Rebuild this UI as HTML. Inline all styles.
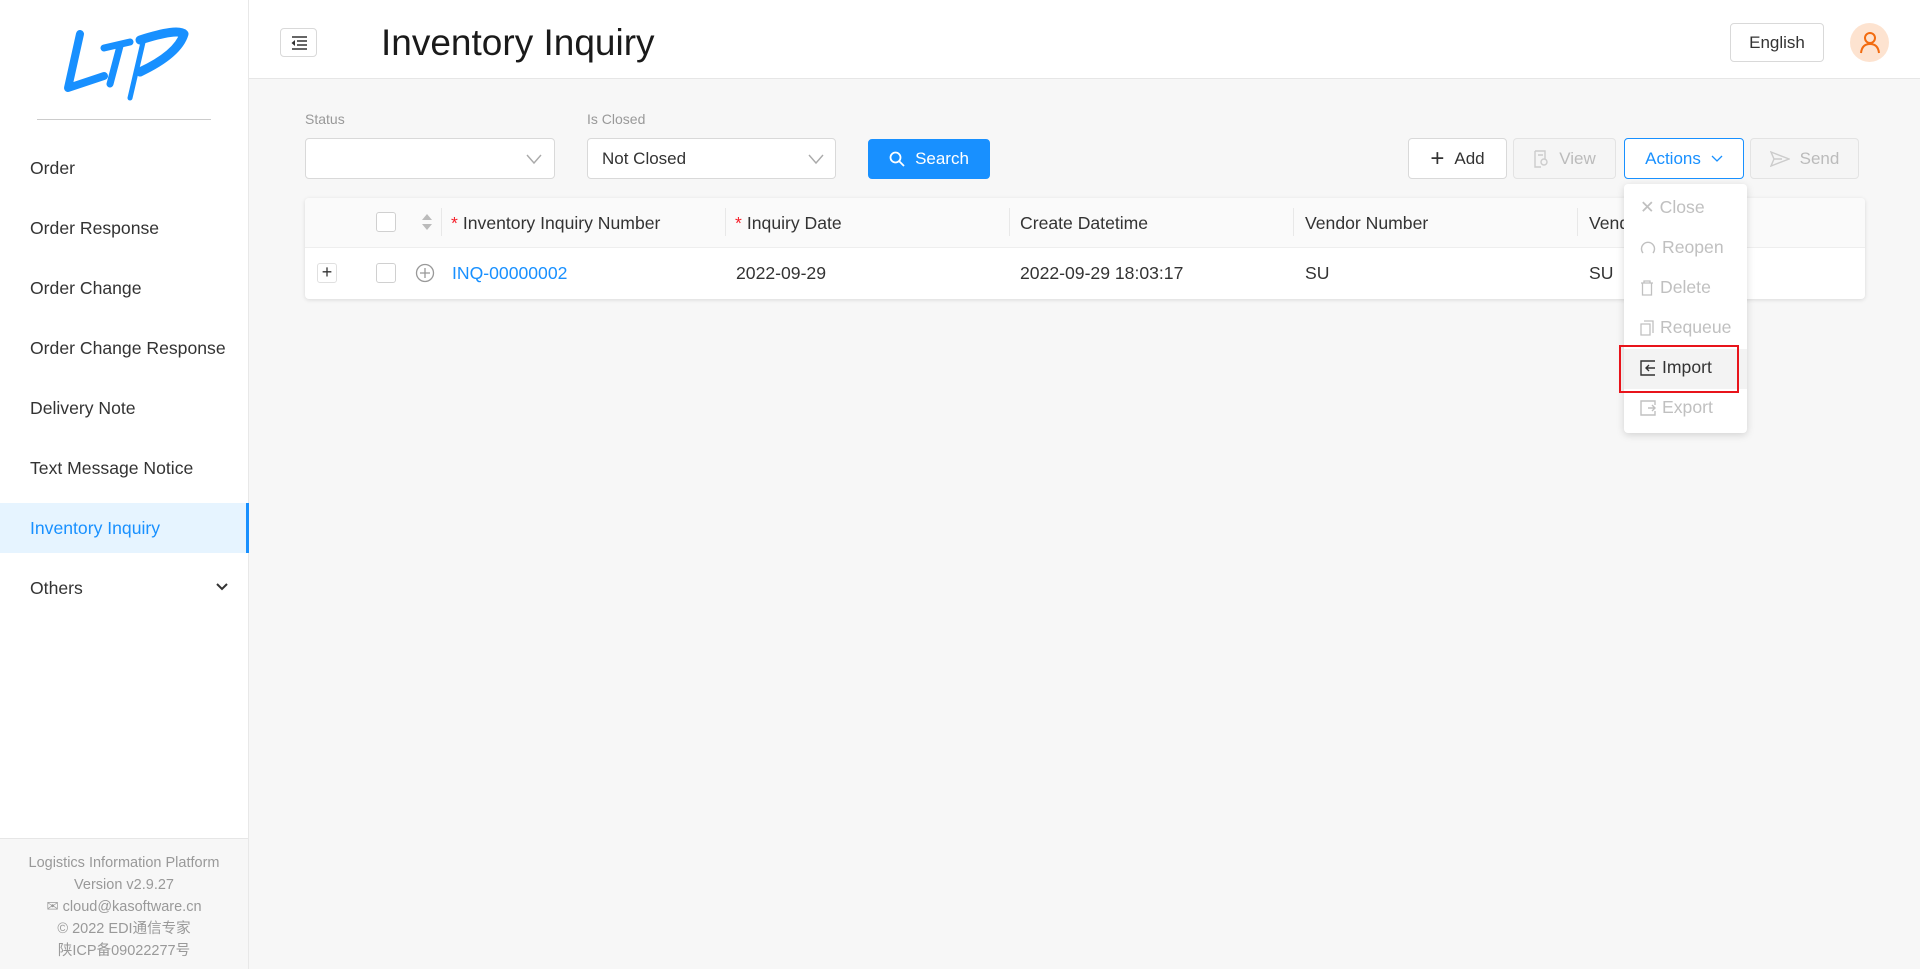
<!DOCTYPE html>
<html><head><meta charset="utf-8"><style>
*{box-sizing:border-box;margin:0;padding:0}
body{width:1920px;height:969px;overflow:hidden;font-family:"Liberation Sans","Noto Sans CJK SC",sans-serif;background:#f7f7f7;color:#333;position:relative;font-size:17px}
.abs{position:absolute}
#side{left:0;top:0;width:249px;height:969px;background:#fff;border-right:1px solid #e8e8e8}
.mi{position:absolute;left:30px;font-size:17.6px;color:#333;line-height:20px}
#hdr{left:249px;top:0;width:1671px;height:79px;background:#fff;border-bottom:1px solid #e6e6e6}
.btn{position:absolute;height:41px;border:1px solid #d9d9d9;border-radius:4px;background:#fff;font-size:17px;display:flex;align-items:center;justify-content:center;gap:10px}
.dis{background:#f5f5f5;color:#bbb;border-color:#e3e3e3}
.sel{position:absolute;top:138px;height:41px;border:1px solid #d9d9d9;border-radius:4px;background:#fff;font-size:17px;padding-left:14px;line-height:39px}
.lbl{position:absolute;top:111px;font-size:14px;color:#999}
.th{position:absolute;top:213px;font-size:17.6px;color:#333}
.td{position:absolute;top:263px;font-size:17.6px;color:#333}
.sep{position:absolute;top:208px;width:1px;height:28px;background:#e8e8e8}
.cb{position:absolute;width:20px;height:20px;border:1px solid #d0d0d0;border-radius:3px;background:#fff}
.dd{position:absolute;left:1640px;font-size:17.6px;color:#c0c0c0;display:flex;align-items:center;gap:6px}
.req{color:#f5222d;margin-right:5px}
</style></head><body>
<div id="side" class="abs">
<svg class="abs" style="left:60px;top:26px" width="130" height="76" viewBox="0 0 130 76"><g fill="none" stroke="#1890ff" stroke-linecap="round" stroke-linejoin="round"><path d="M20 8 L8 62 L44 50" stroke-width="8"/><path d="M60 20 L50 58 M44 22 L70 16" stroke-width="7"/><path d="M84 12 L70 72" stroke-width="5"/><path d="M80 14 Q118 2 124 8 Q118 28 80 46" stroke-width="9"/></g></svg>
<div class="abs" style="left:37px;top:119px;width:174px;height:1px;background:#ccc"></div>
<div class="mi" style="top:158px">Order</div>
<div class="mi" style="top:218px">Order Response</div>
<div class="mi" style="top:278px">Order Change</div>
<div class="mi" style="top:338px">Order Change Response</div>
<div class="mi" style="top:398px">Delivery Note</div>
<div class="mi" style="top:458px">Text Message Notice</div>
<div class="abs" style="left:0;top:503px;width:249px;height:50px;background:#e6f4ff;border-right:3px solid #1890ff"></div>
<div class="mi" style="top:518px;color:#1890ff">Inventory Inquiry</div>
<div class="mi" style="top:578px">Others</div>
<svg class="abs" style="left:215px;top:582px" width="14" height="10" viewBox="0 0 14 10"><path d="M2 2 L7 7 L12 2" stroke="#333" stroke-width="2" fill="none"/></svg>
<div class="abs" style="left:0;top:838px;width:248px;height:131px;background:#f7f7f7;border-top:1px solid #e6e6e6;text-align:center;font-size:14.5px;color:#999;line-height:22px;padding-top:13px">Logistics Information Platform<br>Version v2.9.27<br>✉ cloud@kasoftware.cn<br>© 2022 EDI通信专家<br>陕ICP备09022277号</div>
</div>
<div id="hdr" class="abs">
<div class="abs" style="left:31px;top:28px;width:37px;height:29px;border:1px solid #d9d9d9;border-radius:4px"><svg style="position:absolute;left:9px;top:6px" width="18" height="16" viewBox="0 0 18 16"><path d="M2 2h15M7 6h10M7 10h10M2 14h15" stroke="#333" stroke-width="1.6"/><path d="M5 5 L1.5 8 L5 11z" fill="#333"/></svg></div>
<div class="abs" style="left:132px;top:22px;font-size:37px;color:#1a1a1a">Inventory Inquiry</div>
<div class="abs" style="left:1481px;top:23px;width:94px;height:39px;border:1px solid #d9d9d9;border-radius:4px;font-size:17px;display:flex;align-items:center;justify-content:center">English</div>
<div class="abs" style="left:1601px;top:23px;width:39px;height:39px;border-radius:50%;background:#fde3d0"><svg style="position:absolute;left:9px;top:8px" width="22" height="24" viewBox="0 0 22 24"><circle cx="11" cy="7" r="5" stroke="#f26b0f" stroke-width="2" fill="none"/><path d="M2 22 Q3 13 11 13 Q19 13 20 22" stroke="#f26b0f" stroke-width="2" fill="none"/></svg></div>
</div>
<div class="lbl" style="left:305px">Status</div>
<div class="lbl" style="left:587px">Is Closed</div>
<div class="sel" style="left:305px;width:250px"></div>
<div class="sel" style="left:587px;width:249px;color:#333">Not Closed</div>
<svg class="abs" style="left:526px;top:153px" width="16" height="12" viewBox="0 0 16 12"><path d="M1 2 L8 10 L15 2" stroke="#aaa" stroke-width="1.4" fill="none"/></svg>
<svg class="abs" style="left:808px;top:153px" width="16" height="12" viewBox="0 0 16 12"><path d="M1 2 L8 10 L15 2" stroke="#aaa" stroke-width="1.4" fill="none"/></svg>
<div class="btn" style="left:868px;top:139px;width:122px;height:40px;background:#1890ff;border-color:#1890ff;color:#fff"><svg width="16" height="16" viewBox="0 0 16 16"><circle cx="6.5" cy="6.5" r="5" stroke="#fff" stroke-width="1.8" fill="none"/><path d="M10 10 L15 15" stroke="#fff" stroke-width="1.8"/></svg>Search</div>
<div class="btn" style="left:1408px;top:138px;width:99px"><span style="font-size:24px;font-weight:300">+</span>Add</div>
<div class="btn dis" style="left:1513px;top:138px;width:103px"><svg width="16" height="18" viewBox="0 0 16 18"><path d="M2 1h10v8M2 1v16h6M5 5h5" stroke="#ccc" stroke-width="1.4" fill="none"/><circle cx="11" cy="12" r="3" stroke="#ccc" stroke-width="1.4" fill="none"/></svg>View</div>
<div class="btn" style="left:1624px;top:138px;width:120px;border-color:#1890ff;color:#1890ff">Actions <svg width="12" height="8" viewBox="0 0 12 8"><path d="M1 1 L6 6 L11 1" stroke="#1890ff" stroke-width="1.3" fill="none"/></svg></div>
<div class="btn dis" style="left:1750px;top:138px;width:109px"><svg width="20" height="16" viewBox="0 0 20 16"><path d="M1 1 L19 8 L1 15 L4 8z M4 8h8" stroke="#ccc" stroke-width="1.4" fill="none"/></svg>Send</div>
<div class="abs" style="left:305px;top:198px;width:1560px;height:101px;background:#fff;border-radius:4px;box-shadow:0 1px 4px rgba(0,0,0,.12)">
<div style="position:absolute;left:0;top:0;width:100%;height:50px;background:#fafafa;border-bottom:1px solid #eee;border-radius:4px 4px 0 0"></div>
</div>
<div class="cb" style="left:376px;top:212px"></div>
<svg class="abs" style="left:421px;top:213px" width="12" height="18" viewBox="0 0 12 18"><path d="M6 1 L11 7 H1z M6 17 L11 11 H1z" fill="#bbb"/></svg>
<div class="sep" style="left:441px"></div><div class="sep" style="left:725px"></div><div class="sep" style="left:1009px"></div><div class="sep" style="left:1293px"></div><div class="sep" style="left:1577px"></div>
<div class="th" style="left:451px"><span class="req">*</span>Inventory Inquiry Number</div>
<div class="th" style="left:735px"><span class="req">*</span>Inquiry Date</div>
<div class="th" style="left:1020px">Create Datetime</div>
<div class="th" style="left:1305px">Vendor Number</div>
<div class="th" style="left:1589px">Vend</div>
<div class="abs" style="left:317px;top:263px;width:20px;height:20px;border:1px solid #e0e0e0;border-radius:3px;text-align:center;line-height:17px;font-size:18px">+</div>
<div class="cb" style="left:376px;top:263px"></div>
<svg class="abs" style="left:415px;top:263px" width="20" height="20" viewBox="0 0 20 20"><circle cx="10" cy="10" r="8.5" stroke="#999" stroke-width="1.3" fill="none"/><path d="M10 5v10M5 10h10" stroke="#999" stroke-width="1.3"/></svg>
<div class="td" style="left:452px;color:#1890ff">INQ-00000002</div>
<div class="td" style="left:736px">2022-09-29</div>
<div class="td" style="left:1020px">2022-09-29 18:03:17</div>
<div class="td" style="left:1305px">SU</div>
<div class="td" style="left:1589px">SU</div>
<div class="abs" style="left:1624px;top:184px;width:123px;height:249px;background:#fff;border-radius:4px;box-shadow:0 2px 8px rgba(0,0,0,.15)"></div>
<div class="abs" style="left:1624px;top:349px;width:123px;height:40px;background:#f3f3f3"></div>
<div class="abs" style="left:1619px;top:345px;width:120px;height:48px;border:2px solid #e8141b"></div>
<div class="dd" style="top:197px">✕ Close</div>
<div class="dd" style="top:237px"><svg width="16" height="16" viewBox="0 0 16 16"><path d="M3 13 A6.5 6.5 0 1 1 13 13" stroke="#c0c0c0" stroke-width="1.4" fill="none"/></svg>Reopen</div>
<div class="dd" style="top:277px"><svg width="14" height="16" viewBox="0 0 14 16"><path d="M1 3h12M4 3V1h6v2M2.5 3v12h9V3" stroke="#c0c0c0" stroke-width="1.3" fill="none"/></svg>Delete</div>
<div class="dd" style="top:317px"><svg width="14" height="16" viewBox="0 0 14 16"><path d="M4 1h9v12M1 4h9v11H1z" stroke="#c0c0c0" stroke-width="1.3" fill="none"/></svg>Requeue</div>
<div class="dd" style="top:357px;color:#333"><svg width="16" height="16" viewBox="0 0 16 16"><path d="M15 1H1v14h14M15 8H6M9 5L6 8l3 3" stroke="#333" stroke-width="1.4" fill="none"/></svg>Import</div>
<div class="dd" style="top:397px"><svg width="16" height="16" viewBox="0 0 16 16"><path d="M15 5V1H1v14h14v-4M8 8h7M12 5l3 3-3 3" stroke="#c0c0c0" stroke-width="1.4" fill="none"/></svg>Export</div>
</body></html>
